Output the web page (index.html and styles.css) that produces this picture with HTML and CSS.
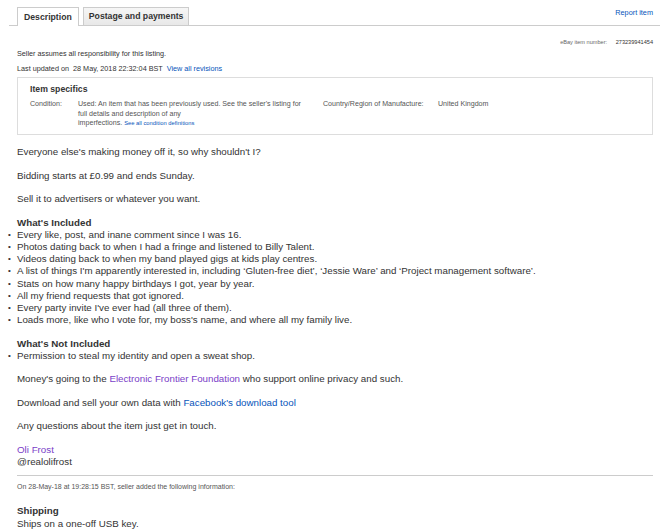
FILE: index.html
```html
<!DOCTYPE html>
<html lang="en">
<head>
  <meta charset="UTF-8" />
  <title>Item description</title>
  <link rel="stylesheet" href="styles.css">
</head>
<body>
  <div class="page">
    <div class="tabs">
      <div class="tab active">Description</div>
      <div class="tab">Postage and payments</div>
      <a class="report" href="#">Report item</a>
    </div>

    <div class="content">
      <div class="item-number">eBay item number: <span>273239941454</span></div>

      <p class="small">Seller assumes all responsibility for this listing.</p>
      <p class="small updated">Last updated on &nbsp;28 May, 2018 22:32:04 BST &nbsp;<a href="#">View all revisions</a></p>

      <div class="specifics">
        <h3>Item specifics</h3>
        <div class="spec-row">
          <div class="spec-label">Condition:</div>
          <div class="spec-value cond">Used: An item that has been previously used. See the seller's listing for full details and description of any <span class="nowrap">imperfections. <a class="tiny-link" href="#">See all condition definitions</a></span></div>
          <div class="spec-label country">Country/Region of Manufacture:</div>
          <div class="spec-value">United Kingdom</div>
        </div>
      </div>

      <div class="desc">
        <p>Everyone else's making money off it, so why shouldn't I?</p>
        <p>Bidding starts at £0.99 and ends Sunday.</p>
        <p>Sell it to advertisers or whatever you want.</p>

        <h4>What's Included</h4>
        <ul>
          <li>Every like, post, and inane comment since I was 16.</li>
          <li>Photos dating back to when I had a fringe and listened to Billy Talent.</li>
          <li>Videos dating back to when my band played gigs at kids play centres.</li>
          <li>A list of things I'm apparently interested in, including ‘Gluten-free diet’, ‘Jessie Ware’ and ‘Project management software’.</li>
          <li>Stats on how many happy birthdays I got, year by year.</li>
          <li>All my friend requests that got ignored.</li>
          <li>Every party invite I've ever had (all three of them).</li>
          <li>Loads more, like who I vote for, my boss's name, and where all my family live.</li>
        </ul>

        <h4>What's Not Included</h4>
        <ul>
          <li>Permission to steal my identity and open a sweat shop.</li>
        </ul>

        <p>Money's going to the <a class="visited" href="#">Electronic Frontier Foundation</a> who support online privacy and such.</p>
        <p>Download and sell your own data with <a href="#">Facebook's download tool</a></p>
        <p>Any questions about the item just get in touch.</p>
        <p><a class="visited" href="#">Oli Frost</a><br>@realolifrost</p>
      </div>

      <div class="added">
        <p class="tiny">On 28-May-18 at 19:28:15 BST, seller added the following information:</p>
        <div class="desc">
          <h4>Shipping</h4>
          Ships on a one-off USB key.
        </div>
      </div>
    </div>
  </div>
</body>
</html>
```

FILE: styles.css
```css
body {
  margin: 0;
  font-family: Arial, "Liberation Sans", sans-serif;
  color: #333;
  background: #fff;
}

a {
  color: #0654ba;
  text-decoration: none;
}

.page {
  padding: 7px 10px 0 9px;
}

.tabs {
  display: flex;
  align-items: flex-end;
  border-bottom: 1px solid #ccc;
  padding-left: 8px;
  height: 18px;
}

.tab {
  font-size: 8.7px;
  font-weight: bold;
  color: #333;
  padding: 0 5px;
  height: 17px;
  line-height: 17px;
  border: 1px solid #ccc;
  border-bottom: none;
  background: linear-gradient(#f6f6f6, #e8e8e8);
  margin-right: 4px;
}

.tab.active {
  background: #fff;
  height: 18px;
  line-height: 18px;
  margin-bottom: -1px;
  padding: 0 6px;
}

.report {
  margin-left: auto;
  align-self: flex-start;
  font-size: 7.3px;
  margin-top: 1px;
  margin-right: 7px;
}

.content {
  padding: 0 7px 0 8px;
}

.item-number {
  text-align: right;
  font-size: 5.6px;
  color: #666;
  margin-top: 13px;
}

.item-number span {
  color: #333;
  margin-left: 7px;
}

.small {
  font-size: 7.25px;
  color: #333;
  margin: 4px 0 0;
}

.small.updated {
  margin-top: 6px;
}

.specifics {
  border: 1px solid #ddd;
  margin-top: 4px;
  padding: 6px 12px 5px;
}

.specifics h3 {
  font-size: 8.7px;
  margin: 0 0 6px;
  color: #333;
}

.spec-row {
  display: flex;
  font-size: 7.1px;
  line-height: 9.6px;
  color: #555;
}

.spec-label {
  width: 48px;
  flex-shrink: 0;
}

.spec-value.cond {
  width: 228px;
  margin-right: 17px;
}

.spec-label.country {
  width: 115px;
}

.nowrap {
  display: block;
  white-space: nowrap;
}

.tiny-link {
  font-size: 5.8px;
}

.desc {
  font-size: 9.75px;
  line-height: 12.2px;
  color: #333;
}

.desc p {
  margin: 11.3px 0 0;
}

.desc h4 {
  font-size: 9.75px;
  margin: 11.3px 0 0;
}

.desc ul {
  margin: 0 0 0 -9px;
  padding-left: 0;
  list-style: none;
}

.desc li::before {
  content: "\2022";
  display: inline-block;
  width: 9px;
  font-size: 8px;
  line-height: 12.2px;
  vertical-align: top;
}

.desc a.visited {
  color: #7a40c8;
}

.added {
  border-top: 1px solid #ccc;
  margin-top: 7px;
}

.tiny {
  font-size: 7px;
  color: #555;
  margin: 7px 0 0;
}

.added .desc h4 {
  margin-top: 15px;
}
```
